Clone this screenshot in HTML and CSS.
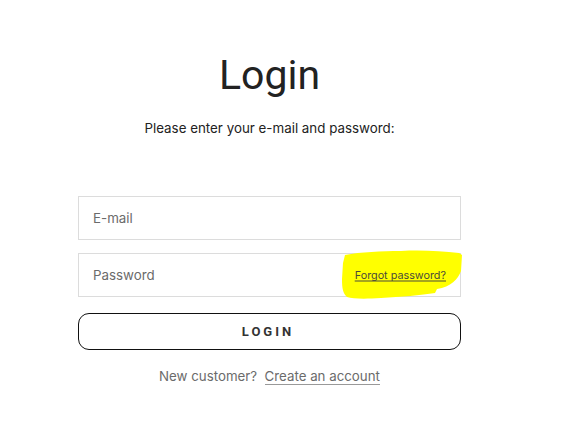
FILE: index.html
```html
<!DOCTYPE html>
<html>
<head>
<meta charset="utf-8">
<link rel="stylesheet" href="styles.css">
</head>
<body>
<main class="page">
  <h1 class="title">Login</h1>
  <p class="subtitle">Please enter your e-mail and password:</p>
  <form class="form">
    <div class="field"><span class="placeholder">E-mail</span></div>
    <div class="field field-password">
      <span class="placeholder">Password</span>
      <svg class="highlight" width="122" height="52" viewBox="0 0 122 52" aria-hidden="true">
        <path d="M4 6 C20 3 40 2 60 2 C80 1 100 2 118 4 L121 6 L120 22 C117 30 110 38 96 40 L94 44 C80 46 60 48 40 49 C25 50 12 50 6 48 C2 44 1 40 1 30 L2 14 Z" fill="#ffff00"/>
      </svg>
      <a class="forgot" href="#">Forgot password?</a>
    </div>
    <button class="login-btn" type="button">LOGIN</button>
  </form>
  <p class="signup">New customer?&nbsp; <a href="#" class="signup-link">Create an account</a></p>
</main>
</body>
</html>
```

FILE: styles.css
```css
* { box-sizing: border-box; }
body {
  margin: 0;
  background: #fff;
  font-family: Inter, "Noto Sans", sans-serif;
  color: #222;
}
.page {
  width: 383px;
  margin-left: 78px;
  padding-top: 49px;
  display: flex;
  flex-direction: column;
  align-items: stretch;
}
.title {
  margin: 0;
  font-family: Roboto, Inter, sans-serif;
  font-size: 41px;
  font-weight: 400;
  line-height: 52px;
  text-align: center;
  color: #222;
}
.subtitle {
  margin: 17px 0 0;
  font-size: 13.35px;
  line-height: 20px;
  text-align: center;
  color: #222;
}
.form {
  margin-top: 58px;
  display: flex;
  flex-direction: column;
  gap: 13px;
}
.field {
  position: relative;
  height: 44px;
  border: 1px solid #dcdcdc;
  display: flex;
  align-items: center;
  padding-left: 14px;
}
.placeholder {
  font-size: 13.35px;
  color: #6b6b6b;
}
.highlight {
  position: absolute;
  left: 262px;
  top: -5px;
}
.forgot {
  position: absolute;
  right: 14px;
  top: 50%;
  transform: translateY(-50%);
  font-size: 10.8px;
  color: #4a4a3a;
  text-decoration: underline;
  text-underline-offset: 2px;
}
.login-btn {
  margin-top: 3px;
  height: 37px;
  border: 1px solid #111;
  border-radius: 11px;
  background: #fff;
  font-family: Roboto, Inter, sans-serif;
  font-size: 13px;
  font-weight: 700;
  letter-spacing: 3px;
  color: #333;
  padding-left: 3px;
}
.signup {
  margin: 16px 0 0;
  text-align: center;
  font-size: 13.3px;
  line-height: 20px;
  color: #6b6b6b;
}
.signup-link {
  display: inline-block;
  line-height: 16px;
  color: #6b6b6b;
  text-decoration: none;
  border-bottom: 1px solid #999;
}
```
